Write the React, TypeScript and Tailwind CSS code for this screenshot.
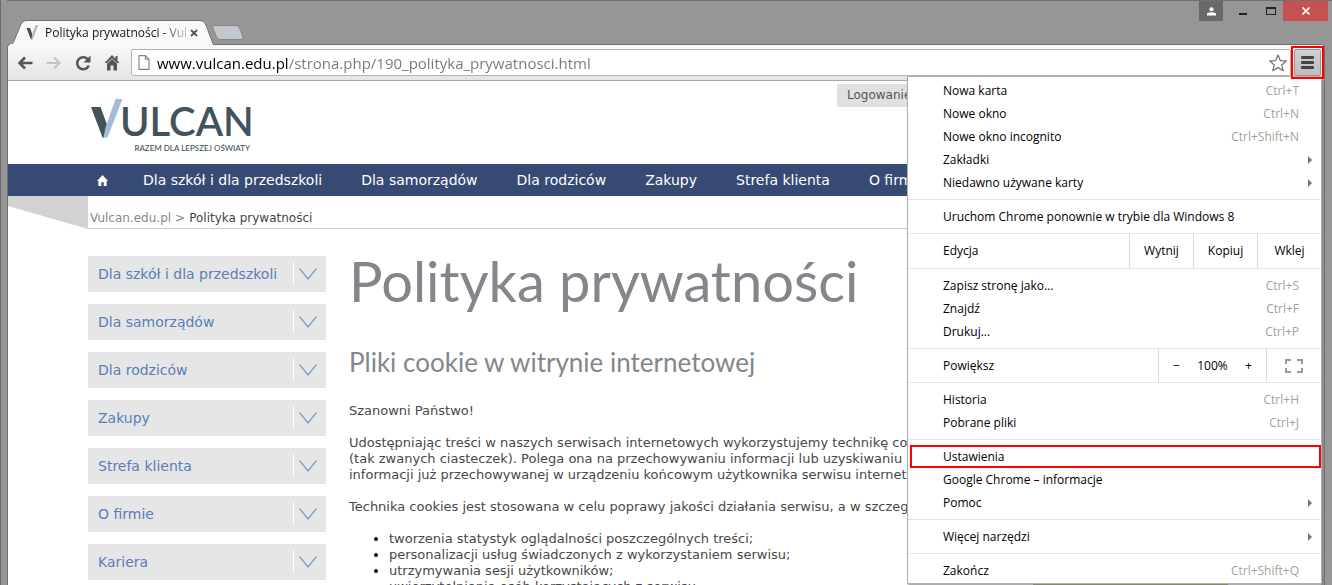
type MenuItem = {
  label: string;
  shortcut?: string;
  submenu?: boolean;
  highlighted?: boolean;
};

const navLinks = [
  "Dla szkół i dla przedszkoli",
  "Dla samorządów",
  "Dla rodziców",
  "Zakupy",
  "Strefa klienta",
  "O firmie",
];

const sideLinks = [...navLinks, "Kariera"];

const tabsItems: MenuItem[] = [
  { label: "Nowa karta", shortcut: "Ctrl+T" },
  { label: "Nowe okno", shortcut: "Ctrl+N" },
  { label: "Nowe okno incognito", shortcut: "Ctrl+Shift+N" },
  { label: "Zakładki", submenu: true },
  { label: "Niedawno używane karty", submenu: true },
];

const pageItems: MenuItem[] = [
  { label: "Zapisz stronę jako...", shortcut: "Ctrl+S" },
  { label: "Znajdź", shortcut: "Ctrl+F" },
  { label: "Drukuj...", shortcut: "Ctrl+P" },
];

const historyItems: MenuItem[] = [
  { label: "Historia", shortcut: "Ctrl+H" },
  { label: "Pobrane pliki", shortcut: "Ctrl+J" },
];

const settingsItems: MenuItem[] = [
  { label: "Ustawienia", highlighted: true },
  { label: "Google Chrome – informacje" },
  { label: "Pomoc", submenu: true },
];

const VulcanMark = ({ className }: { className: string }) => (
  <svg viewBox="0 0 32 40" className={className} aria-hidden="true">
    <path d="M0 8h9.500l7 19-3 11.500h-2z" fill="#42535d" />
    <path d="M24.500 0h7L16.500 38.500h-4l2-10z" fill="#a3bdd6" />
  </svg>
);

const Tab = () => (
  <div className="relative ml-[2px] h-[25px] w-[204px]">
    <svg viewBox="0 0 204 25" className="absolute inset-0 h-full w-full" aria-hidden="true">
      <path
        d="M0 25C4 24 4 23 5 21L12 4Q13.500 .5 17 .5H191Q195 .5 196.500 4L203 21Q204 24 204 25z"
        fill="#f9f9f9"
        stroke="#707070"
      />
      <path d="M1 24.500H204" stroke="#f9f9f9" />
    </svg>
    <div className="relative flex h-full items-center pl-[17px]">
      <VulcanMark className="h-[15px] w-[13px]" />
      <span className="ml-[6px] w-[143px] bg-[linear-gradient(to_right,#111_116px,#bbb_138px)] bg-clip-text text-[12px] whitespace-nowrap text-transparent">
        Polityka prywatności - Vul
      </span>
      <button type="button" aria-label="Zamknij kartę" className="ml-[2px]">
        <svg viewBox="0 0 8 8" className="h-2 w-2">
          <path d="M1 1l6 6M7 1L1 7" stroke="#555" strokeWidth="1.800" />
        </svg>
      </button>
    </div>
  </div>
);

const TitleBar = () => (
  <div className="flex h-[44px] items-start border-t border-[#707070]">
    <div className="flex flex-1 items-start pt-[19px]">
      <Tab />
      <button type="button" aria-label="Nowa karta" className="-ml-px">
        <svg viewBox="0 0 32 16" className="mt-[5px] h-4 w-8">
          <path
            d="M2.500 .5H24Q26.500 .5 27.500 3L31 12Q31.500 14.500 29 14.500H8Q5.500 14.500 4.500 12L.8 3Q0 .5 2.500 .5z"
            fill="#c3c8cf"
            stroke="#858585"
          />
        </svg>
      </button>
    </div>
    <button type="button" aria-label="Użytkownik" className="flex h-5 w-6 items-center justify-center bg-[#696969]">
      <svg viewBox="0 0 10 10" className="h-[9px] w-[9px]" fill="#fff">
        <circle cx="5" cy="2.500" r="2.300" />
        <path d="M0 9.500V8Q0 5.800 5 5.800T10 8v1.500z" />
      </svg>
    </button>
    <button type="button" aria-label="Minimalizuj" className="flex h-5 w-10 items-center justify-center">
      <span className="mt-[6px] h-[2px] w-2 bg-[#222]" />
    </button>
    <button type="button" aria-label="Maksymalizuj" className="flex h-5 w-4 items-center justify-center">
      <span className="h-2 w-[10px] border border-t-2 border-[#222]" />
    </button>
    <button
      type="button"
      aria-label="Zamknij"
      className="mr-1 ml-1 flex h-5 w-[45px] items-center justify-center bg-[#c75050]"
    >
      <svg viewBox="0 0 8 8" className="h-2 w-2">
        <path d="M.5 .5l7 7M7.500 .5l-7 7" stroke="#fff" strokeWidth="1.600" />
      </svg>
    </button>
  </div>
);

const Toolbar = () => (
  <div className="flex h-9 items-center rounded-t-[3px] border-b border-[#a6a6a6] bg-linear-to-b from-[#f9f9f9] to-[#e4e4e4] pl-[9px]">
    <button type="button" aria-label="Wstecz">
      <svg viewBox="0 0 16 16" className="h-4 w-4" fill="none" stroke="#555" strokeWidth="2.600">
        <path d="M15.500 8H2.500M8 2.500L2.500 8 8 13.500" />
      </svg>
    </button>
    <button type="button" aria-label="Dalej" className="ml-[13px]">
      <svg viewBox="0 0 16 16" className="h-4 w-4" fill="none" stroke="#c6c6c6" strokeWidth="2.200">
        <path d="M.5 8h13M8 2.500l5.500 5.500L8 13.500" />
      </svg>
    </button>
    <button type="button" aria-label="Odśwież" className="ml-[13px]">
      <svg viewBox="0 0 16 16" className="h-4 w-4">
        <path d="M13.800 10.500A6 6 0 1 1 12.500 4" fill="none" stroke="#555" strokeWidth="2.500" />
        <path d="M15.500 .5V7.500H8.500z" fill="#555" />
      </svg>
    </button>
    <button type="button" aria-label="Strona startowa" className="ml-[13px]">
      <svg viewBox="0 0 16 16" className="h-4 w-4">
        <path d="M8 0L.5 8H3v7.500h3.500V10.500h3v5H13V8h2.500L13.500 5.800V1H11.500v2.700z" fill="#555" />
        <path d="M3 8.500L8 3.500l5 5" fill="none" stroke="#eee" strokeWidth=".8" />
      </svg>
    </button>
    <div className="ml-[11px] flex h-[27px] flex-1 items-center rounded-[2px] border border-[#b5b5b5] bg-white pr-[3px] pl-[6px]">
      <svg viewBox="0 0 12 16" className="h-[15px] w-3 shrink-0" aria-hidden="true">
        <path
          d="M.7 .7H7.500L11.300 4.500V15.300H.7zM7.500 .7V4.500h3.800"
          fill="#fff"
          stroke="#858585"
          strokeWidth="1.200"
        />
      </svg>
      <input
        type="text"
        aria-label="Adres strony"
        defaultValue="www.vulcan.edu.pl/strona.php/190_polityka_prywatnosci.html"
        className="ml-[7px] min-w-0 flex-1 bg-[linear-gradient(to_right,#000_132px,#777_132px)] bg-clip-text text-[15px] leading-6 text-transparent outline-none"
      />
      <button type="button" aria-label="Dodaj do zakładek">
        <svg viewBox="0 0 18 18" className="h-[18px] w-[18px]">
          <path
            d="M9 1l2.300 5.600 6 .4-4.600 3.900 1.500 5.900L9 13.600l-5.200 3.200 1.500-5.900L.7 7l6-.4z"
            fill="#fff"
            stroke="#777"
            strokeWidth="1.300"
            strokeLinejoin="round"
          />
        </svg>
      </button>
    </div>
    {/* the frame stays above the open menu */}
    <div className="relative z-10 border-2 border-[#f00] p-px">
      <button
        type="button"
        aria-label="Menu"
        className="flex h-[27px] w-[27px] flex-col items-center justify-center gap-[2px] rounded-[2px] border border-[#999] bg-linear-to-b from-[#d0d0d0] to-[#bdbdbd]"
      >
        <span className="h-[3px] w-[13px] rounded-[1px] bg-[#444]" />
        <span className="h-[3px] w-[13px] rounded-[1px] bg-[#444]" />
        <span className="h-[3px] w-[13px] rounded-[1px] bg-[#444]" />
      </button>
    </div>
  </div>
);

const SiteHeader = () => (
  <header>
    <div className="flex h-[83px] items-start">
      <a href="#" className="ml-[83px] block w-[159px] pt-[18px] text-[#42535d]">
        <span className="flex h-10 items-start">
          <VulcanMark className="h-10 w-8 shrink-0" />
          <span className="-ml-[3px] font-[Lato,sans-serif] text-[40px] leading-[44px] font-semibold">ULCAN</span>
        </span>
        <span className="block pt-1 text-right font-[Lato,sans-serif] text-[8px] leading-[10px] font-medium whitespace-nowrap">
          RAZEM DLA LEPSZEJ OŚWIATY
        </span>
      </a>
      <a
        href="#"
        className="mt-[3px] mr-[396px] ml-auto w-[88px] bg-[#e0e0e0] pl-[10px] text-[12px] leading-[23px] text-[#555]"
      >
        Logowanie
      </a>
    </div>
    <nav className="flex h-8 items-center gap-[39px] overflow-hidden bg-[#374a73] pl-[89px] text-[14px] whitespace-nowrap text-white">
      <a href="#" aria-label="Strona główna" className="-mr-1 block">
        <svg viewBox="0 0 12 12" className="h-[11px] w-[11px]" fill="#fff">
          <path d="M6 0l6 6.500h-1.500V12H7.300V8H4.700v4H1.500V6.500H0z" />
        </svg>
      </a>
      {navLinks.map((link) => (
        <a key={link} href="#">
          {link}
        </a>
      ))}
    </nav>
    <div className="flex h-[33px]">
      <svg viewBox="0 0 80 33" className="h-[33px] w-20" aria-hidden="true">
        <path d="M0 0H80V33L0 10z" fill="#d2d2d2" />
      </svg>
      <div className="flex flex-1 items-center gap-1 border-b border-[#ccc] pt-3 pl-[2px] text-[12px] text-[#888]">
        <a href="#">Vulcan.edu.pl</a>
        <span>&gt;</span>
        <span className="text-[#444]">Polityka prywatności</span>
      </div>
    </div>
  </header>
);

const Sidebar = () => (
  <ul className="flex w-[238px] shrink-0 flex-col gap-3">
    {sideLinks.map((link) => (
      <li key={link} className="flex h-9 items-center bg-[#e6e6e6] pl-[10px]">
        <a href="#" className="flex-1 text-[14px] whitespace-nowrap text-[#5a7dba]">
          {link}
        </a>
        <button
          type="button"
          aria-label={`Rozwiń: ${link}`}
          className="mr-[9px] flex h-6 items-center border-l border-white pl-[5px]"
        >
          <svg viewBox="0 0 18 12" className="h-3 w-[18px]" fill="none" stroke="#7f9bcb" strokeWidth="1.200">
            <path d="M.5 .5L9 11 17.500 .5" />
          </svg>
        </button>
      </li>
    ))}
  </ul>
);

const Article = () => (
  <article className="w-[620px] shrink-0 text-[13px] leading-4 whitespace-nowrap text-[#484848]">
    <h1 className="font-[Lato,sans-serif] text-[56px] leading-[50px] text-[#83878b]">Polityka prywatności</h1>
    <h2 className="mt-10 font-[Lato,sans-serif] text-[26px] leading-8 text-[#83878b]">
      Pliki cookie w witrynie internetowej
    </h2>
    <p className="mt-[25px]">Szanowni Państwo!</p>
    <p className="mt-4">
      Udostępniając treści w naszych serwisach internetowych wykorzystujemy technikę cookies
      <br />
      (tak zwanych ciasteczek). Polega ona na przechowywaniu informacji lub uzyskiwaniu
      <br />
      informacji już przechowywanej w urządzeniu końcowym użytkownika serwisu internetowego.
    </p>
    <p className="mt-4">
      Technika cookies jest stosowana w celu poprawy jakości działania serwisu, a w szczególności:
    </p>
    <ul className="mt-4 list-disc pl-10 marker:text-black">
      <li>tworzenia statystyk oglądalności poszczególnych treści;</li>
      <li>personalizacji usług świadczonych z wykorzystaniem serwisu;</li>
      <li>utrzymywania sesji użytkowników;</li>
      <li>uwierzytelniania osób korzystających z serwisu.</li>
    </ul>
  </article>
);

const Section = ({ items }: { items: MenuItem[] }) => (
  <div className="border-b border-[#e5e5e5] py-[5px]">
    {items.map((item) => (
      <button
        key={item.label}
        type="button"
        className={
          item.highlighted
            ? "mx-[2px] flex h-[23px] w-[411px] items-center border-2 border-[#f00] pl-[31px]"
            : "flex h-[23px] w-full items-center pr-[9px] pl-[35px]"
        }
      >
        <span className="flex-1 text-left">{item.label}</span>
        {item.shortcut && <span className="mr-[13px] text-[#a3a197]">{item.shortcut}</span>}
        {item.submenu && (
          <svg viewBox="0 0 4 8" className="h-2 w-1" aria-hidden="true">
            <path d="M0 0l4 4-4 4z" fill="#777" />
          </svg>
        )}
      </button>
    ))}
  </div>
);

const ChromeMenu = () => (
  <div className="absolute top-[76px] right-[10px] w-[415px] border border-[#b0b0b0] bg-white text-[12px] leading-4 text-black shadow-[1px_1px_2px_#888]">
    <div className="-mt-[3px]">
      <Section items={tabsItems} />
    </div>
    <Section items={[{ label: "Uruchom Chrome ponownie w trybie dla Windows 8" }]} />
    <div className="flex h-[35px] border-b border-[#e5e5e5] pl-[35px]">
      <span className="flex flex-1 items-center">Edycja</span>
      {["Wytnij", "Kopiuj", "Wklej"].map((label) => (
        <button key={label} type="button" className="w-16 border-l border-[#d9d9d9]">
          {label}
        </button>
      ))}
    </div>
    <Section items={pageItems} />
    <div className="flex h-[34px] border-b border-[#e5e5e5] pl-[35px]">
      <span className="flex flex-1 items-center">Powiększ</span>
      <div className="flex w-[108px] items-center justify-between border-l border-[#d9d9d9] px-[14px]">
        <button type="button" aria-label="Pomniejsz">
          −
        </button>
        <span>100%</span>
        <button type="button" aria-label="Powiększ">
          +
        </button>
      </div>
      <button
        type="button"
        aria-label="Pełny ekran"
        className="flex w-[55px] items-center justify-center border-l border-[#d9d9d9]"
      >
        <svg viewBox="0 0 18 14" className="h-[14px] w-[18px]" fill="none" stroke="#999" strokeWidth="2">
          <path d="M1 5V1h5M12 1h5v4M17 9v4h-5M6 13H1V9" />
        </svg>
      </button>
    </div>
    <Section items={historyItems} />
    <Section items={settingsItems} />
    <Section items={[{ label: "Więcej narzędzi", submenu: true }]} />
    <div className="-mb-[5px]">
      <Section items={[{ label: "Zakończ", shortcut: "Ctrl+Shift+Q" }]} />
    </div>
  </div>
);

const App = () => {
  return (
    <div className="relative flex h-screen flex-col overflow-hidden border-l border-[#6b6b6b] bg-[#969696] font-['Open_Sans',sans-serif]">
      <div className="pl-[6px]">
        <TitleBar />
      </div>
      <div className="mr-[7px] ml-[6px] flex min-h-0 flex-1 flex-col rounded-t-[4px] border border-b-0 border-[#707070] bg-white">
        <Toolbar />
        <main className="min-h-0 flex-1 overflow-hidden border-r-[3px] border-[#909090] font-['DejaVu_Sans',sans-serif]">
          <SiteHeader />
          <div className="flex gap-[23px] pt-[27px] pl-20">
            <Sidebar />
            <Article />
            {/* green banner of the right column */}
            <aside className="mt-[328px] ml-[41px] h-10 w-[195px] shrink-0 bg-[#7d8f2e]" />
          </div>
        </main>
      </div>
      <ChromeMenu />
    </div>
  );
};

export default App;
